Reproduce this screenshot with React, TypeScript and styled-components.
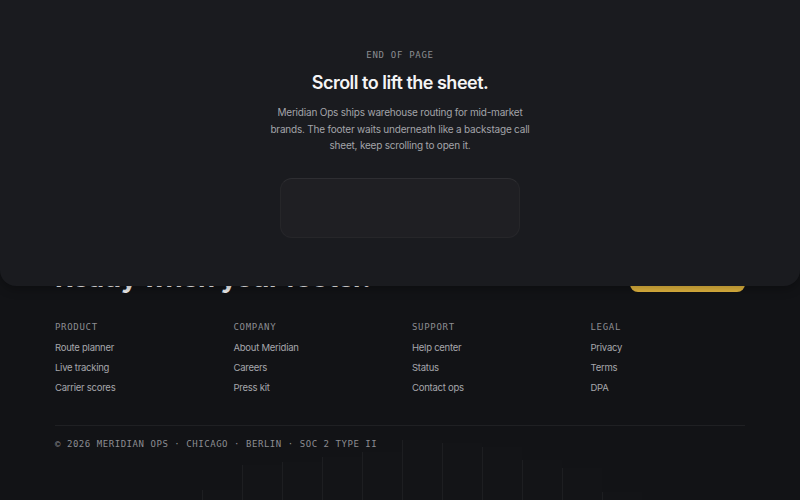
import styled, { createGlobalStyle } from 'styled-components';

const GlobalStyle = createGlobalStyle`
  html, body {
    margin: 0;
    padding: 0;
    background: #121316;
  }
  body {
    font-family: Inter, "Noto Sans", sans-serif;
    -webkit-font-smoothing: antialiased;
  }
`;

const columns = [
  { title: 'Product', links: ['Route planner', 'Live tracking', 'Carrier scores'] },
  { title: 'Company', links: ['About Meridian', 'Careers', 'Press kit'] },
  { title: 'Support', links: ['Help center', 'Status', 'Contact ops'] },
  { title: 'Legal', links: ['Privacy', 'Terms', 'DPA'] },
];

const skyline = [10, 35, 38, 43, 48, 60, 57, 53, 40, 32, 8];

const App = () => {
  return (
    <>
      <GlobalStyle />
      <Stage>
        <Footer>
          <FooterTop>
            <BigLine>Ready when your footer.</BigLine>
            <CtaButton>Book a demo</CtaButton>
          </FooterTop>

          <LinkGrid>
            {columns.map((col) => (
              <Column key={col.title}>
                <ColumnTitle>{col.title}</ColumnTitle>
                {col.links.map((link) => (
                  <FooterLink key={link} href="#">
                    {link}
                  </FooterLink>
                ))}
              </Column>
            ))}
          </LinkGrid>

          <Divider />
          <Legal>© 2026 Meridian Ops · Chicago · Berlin · SOC 2 Type II</Legal>

          <Skyline>
            {skyline.map((h, i) => (
              <Tower key={i} style={{ height: h }} />
            ))}
          </Skyline>
        </Footer>

        <Sheet>
          <Eyebrow>End of page</Eyebrow>
          <Title>Scroll to lift the sheet.</Title>
          <Lede>
            Meridian Ops ships warehouse routing for mid-market brands. The footer
            waits underneath like a backstage call sheet, keep scrolling to open it.
          </Lede>
          <Placeholder />
        </Sheet>
      </Stage>
    </>
  );
};

export default App;

const mono = `
  font-family: "DejaVu Sans Mono", "Liberation Mono", monospace;
  font-size: 9px;
  line-height: 12px;
  letter-spacing: 0.7px;
  text-transform: uppercase;
  color: #8c8d92;
`;

const Stage = styled.div`
  display: grid;
  height: 500px;
  overflow: hidden;

  > * {
    grid-area: 1 / 1;
  }
`;

const Sheet = styled.section`
  z-index: 2;
  height: 286px;
  box-sizing: border-box;
  padding-top: 49px;
  display: flex;
  flex-direction: column;
  align-items: center;
  background: #1a1b1f;
  border-radius: 0 0 16px 16px;
  box-shadow: 0 4px 10px rgba(0, 0, 0, 0.25);
`;

const Eyebrow = styled.div`
  ${mono}
`;

const Title = styled.h1`
  margin: 10px 0 0;
  font-size: 18px;
  line-height: 24px;
  font-weight: 600;
  letter-spacing: -0.5px;
  color: #f4f4f5;
`;

const Lede = styled.p`
  margin: 9px 0 0;
  width: 262px;
  font-size: 10px;
  line-height: 16.5px;
  letter-spacing: -0.2px;
  text-align: center;
  color: #a3a4a9;
`;

const Placeholder = styled.div`
  margin-top: 24px;
  width: 240px;
  height: 60px;
  box-sizing: border-box;
  border-radius: 12px;
  background: #1f1f23;
  border: 1px solid rgba(255, 255, 255, 0.03);
  border-top-color: rgba(255, 255, 255, 0.07);
`;

const Footer = styled.footer`
  position: relative;
  z-index: 1;
  box-sizing: border-box;
  padding: 252px 55px 0;
  background: #121316;
`;

const FooterTop = styled.div`
  display: flex;
  justify-content: space-between;
  align-items: flex-end;
  height: 40px;
`;

const BigLine = styled.h2`
  margin: 0;
  font-size: 27.5px;
  line-height: 1;
  font-weight: 700;
  letter-spacing: -0.02em;
  color: #f2f2f3;
  transform: translateY(-1px);
`;

const CtaButton = styled.button`
  width: 115px;
  height: 40px;
  border: 0;
  border-radius: 8px;
  background: #e3b63f;
  color: #16161a;
  font-family: inherit;
  font-size: 13px;
  font-weight: 600;
`;

const LinkGrid = styled.div`
  display: grid;
  grid-template-columns: repeat(4, 1fr);
  gap: 24px;
  margin-top: 29px;
`;

const Column = styled.div`
  display: flex;
  flex-direction: column;
  gap: 8px;
`;

const ColumnTitle = styled.div`
  ${mono}
  margin-bottom: 1px;
`;

const FooterLink = styled.a`
  font-size: 9.5px;
  line-height: 12px;
  letter-spacing: -0.25px;
  color: #a6a7ac;
  text-decoration: none;
`;

const Divider = styled.hr`
  margin: 31px 0 0;
  border: 0;
  height: 1px;
  background: rgba(255, 255, 255, 0.06);
`;

const Legal = styled.div`
  ${mono}
  position: relative;
  z-index: 1;
  margin-top: 12px;
  letter-spacing: 0.55px;
`;

const Skyline = styled.div`
  position: absolute;
  left: 202px;
  bottom: 0;
  display: flex;
  align-items: flex-end;
`;

const Tower = styled.div`
  width: 40px;
  box-sizing: border-box;
  border-left: 1px solid rgba(255, 255, 255, 0.045);
  background: rgba(255, 255, 255, 0.008);
`;
